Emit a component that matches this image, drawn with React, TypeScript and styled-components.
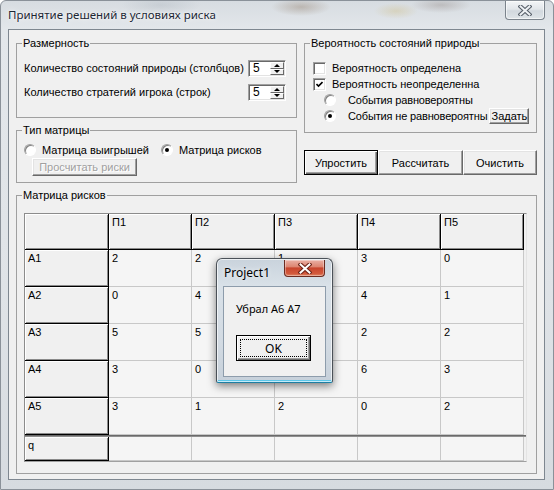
import React from "react";
import styled, { createGlobalStyle, css } from "styled-components";

const GlobalStyle = createGlobalStyle`
  html, body {
    margin: 0;
    padding: 0;
  }
  body {
    font-family: "Liberation Sans", Arial, sans-serif;
    font-size: 11px;
    color: #000;
  }
`;

const Screen = styled.div`
  position: relative;
  width: 554px;
  height: 490px;
  overflow: hidden;
  display: flex;
  flex-direction: column;
  box-sizing: border-box;
  border: 1px solid #8a9199;
  border-radius: 6px 6px 0 0;
  background:
    radial-gradient(ellipse 30px 9px at 300px 6px, rgba(110, 80, 50, 0.28), transparent),
    radial-gradient(ellipse 22px 8px at 395px 10px, rgba(200, 170, 80, 0.25), transparent),
    radial-gradient(ellipse 30px 8px at 440px 4px, rgba(90, 70, 60, 0.22), transparent),
    radial-gradient(ellipse 40px 10px at 160px 4px, rgba(150, 160, 170, 0.25), transparent),
    linear-gradient(#d7dce1, #e3e7eb 6%, #dfe3e7 60%, #d6dbe0);
`;

const TitleBar = styled.div`
  height: 28px;
  display: flex;
  justify-content: space-between;
  align-items: flex-start;
`;

const Title = styled.div`
  height: 27px;
  display: flex;
  align-items: center;
  padding-left: 7px;
  font-family: "Noto Sans", sans-serif;
  font-size: 11.5px;
  color: #1c2734;
  text-shadow: 0 0 6px rgba(255, 255, 255, 0.95), 0 0 2px rgba(255, 255, 255, 0.9);
`;

const CloseButton = styled.div<{ $danger?: boolean }>`
  box-sizing: border-box;
  display: flex;
  align-items: center;
  justify-content: center;
  border-radius: 0 0 4px 4px;
  ${(p) =>
    p.$danger
      ? css`
          width: 41px;
          height: 17px;
          margin: 1px 7px 0 0;
          border: 1px solid #6b2b20;
          border-top: none;
          background: linear-gradient(#eab0a4, #dd8672 42%, #c8452d 50%, #d35a3c 85%, #e08a6a);
          box-shadow: inset 0 0 0 1px rgba(255, 255, 255, 0.35);
        `
      : css`
          width: 40px;
          height: 19px;
          margin-right: 8px;
          border: 1px solid #7b838c;
          border-top: none;
          background: linear-gradient(#f3f5f7, #e2e6ea 45%, #d2d8de 55%, #dfe4e8);
          box-shadow: inset 0 0 0 1px rgba(255, 255, 255, 0.6);
        `}
`;

const Client = styled.div`
  box-sizing: border-box;
  width: 537px;
  height: 451px;
  margin-left: 7px;
  border: 1px solid #7e8790;
  background: #f0f0f0;
  padding: 7px 7px 0 7px;
  display: flex;
  flex-direction: column;
`;

const TopRow = styled.div`
  display: flex;
  gap: 7px;
`;

const Column = styled.div<{ $w: number }>`
  width: ${(p) => p.$w}px;
  display: flex;
  flex-direction: column;
`;

const GroupBox = styled.fieldset<{ $h: number; $mt?: number }>`
  box-sizing: border-box;
  height: ${(p) => p.$h}px;
  margin: ${(p) => p.$mt ?? 0}px 0 0 0;
  padding: 0;
  min-width: 0;
  border: 1px solid #a0a0a0;
`;

const Legend = styled.legend`
  margin-left: 5px;
  padding: 0 1px;
  font-size: 11px;
  line-height: 13px;
`;

const GroupBody = styled.div<{ $pad: string; $gap?: number }>`
  padding: ${(p) => p.$pad};
  display: flex;
  flex-direction: column;
  gap: ${(p) => p.$gap ?? 0}px;
`;

const FieldRow = styled.div`
  height: 17px;
  display: flex;
  align-items: center;
  justify-content: space-between;
`;

const OptionRow = styled.div<{ $indent?: number; $h?: number }>`
  height: ${(p) => p.$h ?? 16}px;
  display: flex;
  align-items: center;
  padding-left: ${(p) => p.$indent ?? 0}px;
  white-space: nowrap;
`;

const Label = styled.span<{ $tight?: boolean }>`
  line-height: 13px;
  letter-spacing: ${(p) => (p.$tight ? "-0.15px" : "0")};
`;

const SpinEdit = styled.div`
  box-sizing: border-box;
  width: 38px;
  height: 17px;
  display: flex;
  align-items: stretch;
  background: #fff;
  border: 1px solid;
  border-color: #a0a0a0 #fff #fff #a0a0a0;
  box-shadow: inset 1px 1px 0 #696969, inset -1px -1px 0 #e3e3e3;
`;

const SpinValue = styled.span`
  flex: 1;
  padding: 1px 0 0 4px;
  font-size: 12px;
  line-height: 13px;
`;

const SpinButtons = styled.div`
  width: 14px;
  margin: 1px 1px 1px 0;
  display: flex;
  flex-direction: column;
`;

const SpinHalf = styled.div<{ $down?: boolean }>`
  flex: 1;
  box-sizing: border-box;
  display: flex;
  align-items: center;
  justify-content: center;
  background: #f0f0f0;
  border: 1px solid;
  border-color: #fff #696969 #696969 #fff;

  &::after {
    content: "";
    width: 0;
    height: 0;
    border-left: 3px solid transparent;
    border-right: 3px solid transparent;
    ${(p) =>
      p.$down
        ? css`
            border-top: 3px solid #000;
          `
        : css`
            border-bottom: 3px solid #000;
          `}
  }
`;

const CheckBox = styled.span`
  box-sizing: border-box;
  width: 13px;
  height: 13px;
  margin-right: 6px;
  flex: none;
  display: flex;
  align-items: center;
  justify-content: center;
  background: #fff;
  border: 1px solid;
  border-color: #a0a0a0 #fff #fff #a0a0a0;
  box-shadow: inset 1px 1px 0 #696969, inset -1px -1px 0 #e3e3e3;
`;

const Radio = styled.span<{ $on?: boolean; $gap: number }>`
  box-sizing: border-box;
  width: 12px;
  height: 12px;
  margin-right: ${(p) => p.$gap}px;
  flex: none;
  border-radius: 50%;
  display: flex;
  align-items: center;
  justify-content: center;
  background: #fff;
  border: 1px solid;
  border-color: #a0a0a0 #fff #fff #a0a0a0;
  box-shadow: inset 1px 1px 0 #808080;

  &::after {
    content: "";
    width: 4px;
    height: 4px;
    border-radius: 50%;
    background: ${(p) => (p.$on ? "#000" : "transparent")};
  }
`;

const Button = styled.button<{ $w: number; $h: number; $default?: boolean; $ml?: number }>`
  box-sizing: border-box;
  width: ${(p) => p.$w}px;
  height: ${(p) => p.$h}px;
  margin: 0 0 0 ${(p) => p.$ml ?? 0}px;
  padding: 0;
  flex: none;
  font-family: "Liberation Sans", Arial, sans-serif;
  font-size: 11px;
  color: #000;
  background: #f0f0f0;
  border: 1px solid;
  border-color: #fff #696969 #696969 #fff;
  box-shadow: inset -1px -1px 0 #a0a0a0, inset 1px 1px 0 #e3e3e3;
  ${(p) =>
    p.$default &&
    css`
      border-color: #000;
      box-shadow: inset 1px 1px 0 #fff, inset -1px -1px 0 #696969, inset -2px -2px 0 #a0a0a0;
    `}
  &:disabled {
    color: #a0a0a0;
    text-shadow: 1px 1px 0 #fff;
  }
`;

const RadioLine = styled.div`
  height: 14px;
  padding-left: 7px;
  display: flex;
  align-items: center;
`;

const RadioItem = styled.span`
  display: flex;
  align-items: center;
  margin-right: 12px;
`;

const ButtonBar = styled.div`
  margin-top: 17px;
  display: flex;
`;

const Grid = styled.div`
  box-sizing: border-box;
  width: 503px;
  height: 249px;
  border: 1px solid;
  border-color: #8c8c8c #e4e4e4 #a0a0a0 #8c8c8c;
  background: #f0f0f0;
  display: grid;
  grid-template-columns: 84px repeat(5, 83px) 1fr;
  grid-template-rows: 36px repeat(5, 37px) 2px 24px;
`;

const Cell = styled.div<{ $fixed?: boolean }>`
  box-sizing: border-box;
  padding: 2px 0 0 3px;
  font-size: 11px;
  line-height: 13px;
  ${(p) =>
    p.$fixed
      ? css`
          background: #f0f0f0;
          border-right: 1px solid #000;
          border-bottom: 1px solid #000;
          box-shadow: inset 1px 1px 0 #fff, inset -1px -1px 0 #8a8a8a;
        `
      : css`
          background: #f5f5f5;
          border-right: 1px solid #c8c8c8;
          border-bottom: 1px solid #c8c8c8;
        `}
`;

const Filler = styled.div`
  background: #f0f0f0;
`;

const Separator = styled.div`
  grid-column: 1 / -1;
  background: #8f8f8f;
  border-top: 1px solid #6a6a6a;
  box-sizing: border-box;
`;

const Dialog = styled.div`
  position: absolute;
  left: 215px;
  top: 257px;
  width: 117px;
  height: 125px;
  box-sizing: border-box;
  display: flex;
  flex-direction: column;
  border: 1px solid #4b5158;
  border-bottom-color: #1d7fa3;
  border-radius: 6px 6px 2px 2px;
  background: linear-gradient(#c9d3dc, #d9e1e8 22%, #d2dae2 70%, #c6d0da);
  box-shadow:
    inset 0 0 0 1px rgba(255, 255, 255, 0.65),
    inset 0 -2px 0 #5cc7ea,
    0 3px 9px rgba(0, 0, 0, 0.5);
`;

const DialogTitleBar = styled.div`
  height: 27px;
  display: flex;
  justify-content: space-between;
  align-items: flex-start;
`;

const DialogTitle = styled.span`
  height: 27px;
  display: flex;
  align-items: center;
  padding-left: 7px;
  font-family: "Noto Sans", sans-serif;
  font-size: 12px;
  color: #000;
  text-shadow: 0 0 5px rgba(255, 255, 255, 0.9);
`;

const DialogClient = styled.div`
  flex: 1;
  margin: 0 6px 5px 6px;
  border: 1px solid #8d9cab;
  background: #f0f0f0;
  display: flex;
  flex-direction: column;
  align-items: flex-start;
  padding-left: 12px;
`;

const Message = styled.span`
  margin-top: 15px;
  font-family: "Noto Sans", sans-serif;
  font-size: 11px;
  line-height: 14px;
`;

const OkButton = styled.button`
  box-sizing: border-box;
  width: 75px;
  height: 26px;
  margin: 19px 0 0 0;
  padding: 3px;
  background: #f0f0f0;
  border: 1px solid #000;
  box-shadow: inset 1px 1px 0 #fff, inset -1px -1px 0 #696969, inset -2px -2px 0 #a0a0a0;
  font-family: "Noto Sans", sans-serif;
  font-size: 12px;
  color: #000;
  display: flex;
`;

const FocusRect = styled.span`
  flex: 1;
  display: flex;
  align-items: center;
  justify-content: center;
  border: 1px dotted #000;
`;

const cols = ["П1", "П2", "П3", "П4", "П5"];

const rows = [
  { name: "A1", values: ["2", "2", "1", "3", "0"] },
  { name: "A2", values: ["0", "4", "3", "4", "1"] },
  { name: "A3", values: ["5", "5", "4", "2", "2"] },
  { name: "A4", values: ["3", "0", "2", "6", "3"] },
  { name: "A5", values: ["3", "1", "2", "0", "2"] },
];

const CloseGlyph: React.FC<{ outline: string; fill: string }> = ({ outline, fill }) => (
  <svg width="14" height="11" viewBox="0 0 14 11">
    <path d="M2.5 1.5 L11.5 9.5 M11.5 1.5 L2.5 9.5" stroke={outline} strokeWidth="4.2" strokeLinecap="square" />
    <path d="M2.5 1.5 L11.5 9.5 M11.5 1.5 L2.5 9.5" stroke={fill} strokeWidth="2" strokeLinecap="square" />
  </svg>
);

const CheckMark = () => (
  <svg width="7" height="7" viewBox="0 0 7 7">
    <path d="M0.5 3 L2.5 5 L6.5 1" stroke="#000" strokeWidth="1.6" fill="none" />
  </svg>
);

const Spin: React.FC<{ value: string }> = ({ value }) => (
  <SpinEdit>
    <SpinValue>{value}</SpinValue>
    <SpinButtons>
      <SpinHalf />
      <SpinHalf $down />
    </SpinButtons>
  </SpinEdit>
);

export default function App() {
  return (
    <>
      <GlobalStyle />
      <Screen>
        <TitleBar>
          <Title>Принятие решений в условиях риска</Title>
          <CloseButton>
            <CloseGlyph outline="#59616b" fill="#eef1f4" />
          </CloseButton>
        </TitleBar>
        <Client>
          <TopRow>
            <Column $w={281}>
              <GroupBox $h={81}>
                <Legend>Размерность</Legend>
                <GroupBody $pad="10px 10px 0 7px" $gap={7}>
                  <FieldRow>
                    <Label>Количество состояний природы (столбцов)</Label>
                    <Spin value="5" />
                  </FieldRow>
                  <FieldRow>
                    <Label>Количество стратегий игрока (строк)</Label>
                    <Spin value="5" />
                  </FieldRow>
                </GroupBody>
              </GroupBox>
              <GroupBox $h={59} $mt={6}>
                <Legend>Тип матрицы</Legend>
                <GroupBody $pad="6px 0 0 0" $gap={1}>
                  <RadioLine>
                    <RadioItem>
                      <Radio $gap={6} />
                      Матрица выигрышей
                    </RadioItem>
                    <RadioItem>
                      <Radio $gap={6} $on />
                      Матрица рисков
                    </RadioItem>
                  </RadioLine>
                  <OptionRow $indent={15} $h={18}>
                    <Button $w={105} $h={18} disabled>
                      Просчитать риски
                    </Button>
                  </OptionRow>
                </GroupBody>
              </GroupBox>
            </Column>
            <Column $w={233}>
              <GroupBox $h={96}>
                <Legend>Вероятность состояний природы</Legend>
                <GroupBody $pad="10px 0 0 8px">
                  <OptionRow>
                    <CheckBox />
                    <Label>Вероятность определена</Label>
                  </OptionRow>
                  <OptionRow>
                    <CheckBox>
                      <CheckMark />
                    </CheckBox>
                    <Label>Вероятность неопределенна</Label>
                  </OptionRow>
                  <OptionRow $indent={11}>
                    <Radio $gap={12} />
                    <Label $tight>События равновероятны</Label>
                  </OptionRow>
                  <OptionRow $indent={11}>
                    <Radio $gap={12} $on />
                    <Label $tight>События не равновероятны</Label>
                    <Button $w={40} $h={16} $ml={2}>
                      Задать
                    </Button>
                  </OptionRow>
                </GroupBody>
              </GroupBox>
              <ButtonBar>
                <Button $w={74} $h={25} $default>
                  Упростить
                </Button>
                <Button $w={85} $h={25}>
                  Рассчитать
                </Button>
                <Button $w={74} $h={25}>
                  Очистить
                </Button>
              </ButtonBar>
            </Column>
          </TopRow>
          <GroupBox $h={285} $mt={6}>
            <Legend>Матрица рисков</Legend>
            <GroupBody $pad="11px 0 0 7px">
              <Grid>
                <Cell $fixed />
                {cols.map((c) => (
                  <Cell key={c} $fixed>
                    {c}
                  </Cell>
                ))}
                <Filler />
                {rows.map((r) => (
                  <React.Fragment key={r.name}>
                    <Cell $fixed>{r.name}</Cell>
                    {r.values.map((v, i) => (
                      <Cell key={i}>{v}</Cell>
                    ))}
                    <Filler />
                  </React.Fragment>
                ))}
                <Separator />
                <Cell $fixed>q</Cell>
                {cols.map((c) => (
                  <Cell key={c} />
                ))}
                <Filler />
              </Grid>
            </GroupBody>
          </GroupBox>
        </Client>
        <Dialog>
          <DialogTitleBar>
            <DialogTitle>Project1</DialogTitle>
            <CloseButton $danger>
              <CloseGlyph outline="#6e2418" fill="#ffffff" />
            </CloseButton>
          </DialogTitleBar>
          <DialogClient>
            <Message>Убрал А6 А7</Message>
            <OkButton>
              <FocusRect>OK</FocusRect>
            </OkButton>
          </DialogClient>
        </Dialog>
      </Screen>
    </>
  );
}
